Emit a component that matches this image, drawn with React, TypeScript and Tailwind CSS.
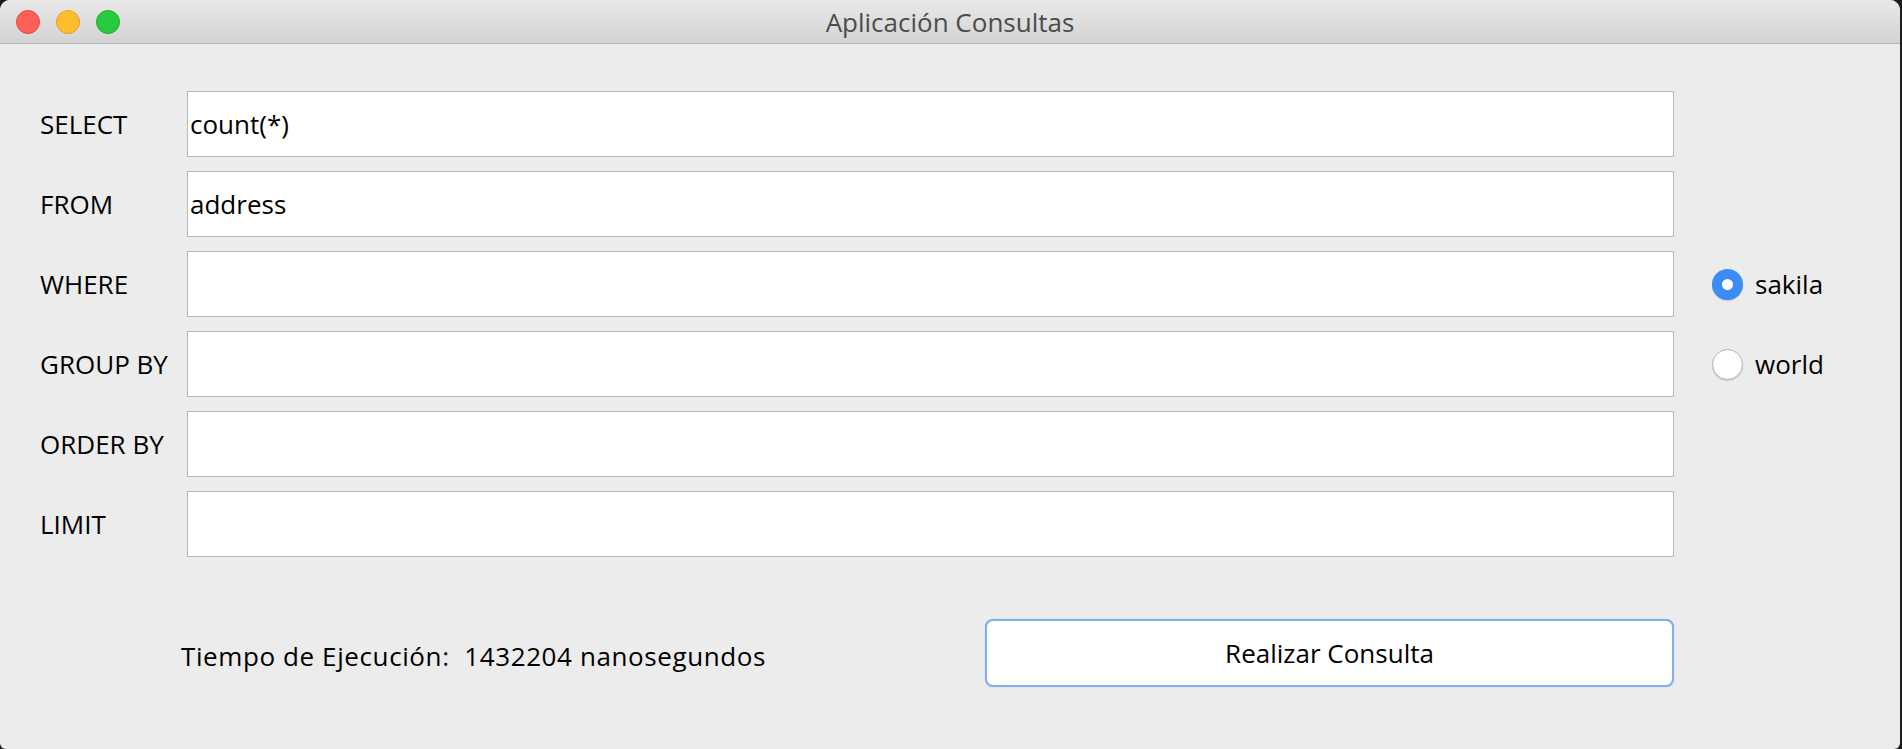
import { useState } from "react";

const rows = [
  { label: "SELECT", value: "count(*)" },
  { label: "FROM", value: "address" },
  { label: "WHERE", value: "", radio: "sakila" },
  { label: "GROUP BY", value: "", radio: "world" },
  { label: "ORDER BY", value: "" },
  { label: "LIMIT", value: "" },
];

const font = { fontFamily: '"Open Sans", "DejaVu Sans", sans-serif' };

function Radio({ checked, label, onClick }: { checked: boolean; label: string; onClick: () => void }) {
  return (
    <button onClick={onClick} className="flex items-center gap-[12px] text-[26px] text-black">
      {checked ? (
        <span className="w-[31px] h-[31px] rounded-full bg-[#3b8cf6] flex items-center justify-center shadow-[0_1px_1px_rgba(0,0,0,0.15)]">
          <span className="w-[11px] h-[11px] rounded-full bg-white" />
        </span>
      ) : (
        <span className="w-[31px] h-[31px] rounded-full bg-white border border-[#b4b4b4] shadow-[0_1px_1px_rgba(0,0,0,0.12)]" />
      )}
      <span className="leading-none">{label}</span>
    </button>
  );
}

export default function App() {
  const [values, setValues] = useState(rows.map((r) => r.value));
  const [db, setDb] = useState("sakila");

  return (
    <div className="w-[1902px] h-[749px] bg-[#1d1d1d] overflow-hidden" style={font}>
      <div className="w-[1900px] h-[749px] bg-[#ececec] rounded-t-[10px] rounded-b-[6px] flex flex-col overflow-hidden">
        {/* title bar */}
        <div className="h-[44px] shrink-0 grid grid-cols-[1fr_auto_1fr] items-center bg-gradient-to-b from-[#e9e9e9] to-[#d3d3d3] border-b border-[#b4b4b4]">
          <div className="flex items-center gap-[16px] pl-[16px]">
            <span className="w-[24px] h-[24px] rounded-full bg-[#fe5f58] border border-[#e2463f]" />
            <span className="w-[24px] h-[24px] rounded-full bg-[#ffbd2e] border border-[#e0a028]" />
            <span className="w-[24px] h-[24px] rounded-full bg-[#29c940] border border-[#1dad2b]" />
          </div>
          <div className="text-[26px] text-[#4c4c4c] leading-none">Aplicación Consultas</div>
          <div />
        </div>

        {/* form */}
        <div className="pt-[47px] pl-[40px] flex flex-col gap-[14px]">
          {rows.map((row, i) => (
            <div key={row.label} className="flex items-center h-[66px]">
              <div className="w-[147px] text-[26px] text-black leading-none">{row.label}</div>
              <input
                value={values[i]}
                onChange={(e) => {
                  const next = [...values];
                  next[i] = e.target.value;
                  setValues(next);
                }}
                className="w-[1487px] h-[66px] bg-white border border-[#bababa] pl-[2px] text-[26px] text-black outline-none"
                style={font}
              />
              {row.radio && (
                <div className="ml-[38px]">
                  <Radio checked={db === row.radio} label={row.radio} onClick={() => setDb(row.radio!)} />
                </div>
              )}
            </div>
          ))}
        </div>

        {/* footer */}
        <div className="mt-[62px] flex items-center">
          <div className="w-[985px] pl-[181px] text-[26px] text-black leading-none tracking-[0.6px] translate-y-[3px] whitespace-pre">
            Tiempo de Ejecución:  1432204 nanosegundos
          </div>
          <button className="w-[689px] h-[68px] bg-white rounded-[8px] border-2 border-[#80b0ea] text-[26px] text-black shadow-[0_0_1px_rgba(90,150,230,0.6)]">
            Realizar Consulta
          </button>
        </div>
      </div>
    </div>
  );
}
